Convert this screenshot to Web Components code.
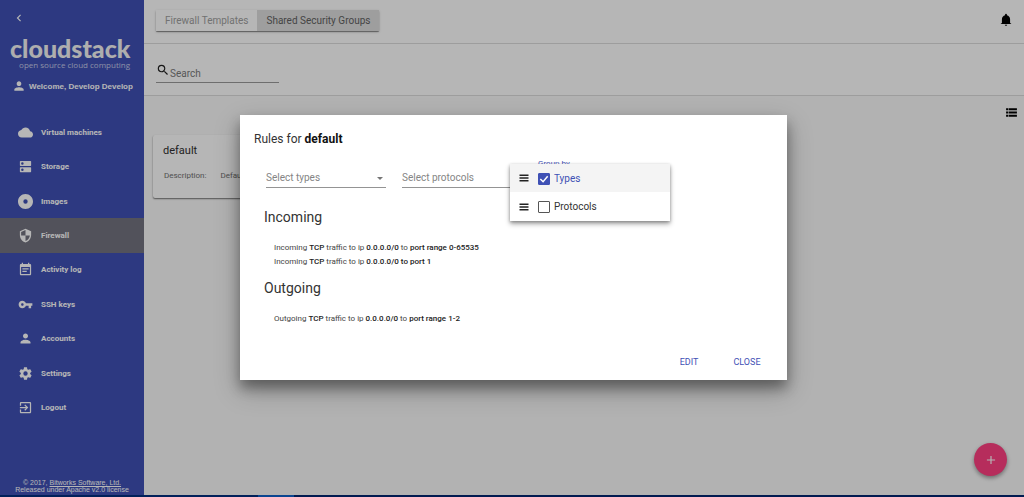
<!DOCTYPE html>
<html lang="en">
<head>
<meta charset="utf-8">
<title>CloudStack UI</title>
<style>
html,body{margin:0;height:100%}
body{font-family:Roboto,"Liberation Sans",sans-serif;background:#fafafa;color:#212121}
</style>
</head>
<body>
<cs-app></cs-app>
<script>
const ICONS = {
  back:'M15.41 7.41L14 6l-6 6 6 6 1.41-1.41L10.83 12z',
  person:'M12 12c2.21 0 4-1.79 4-4s-1.79-4-4-4-4 1.79-4 4 1.79 4 4 4zm0 2c-2.67 0-8 1.34-8 4v2h16v-2c0-2.66-5.33-4-8-4z',
  cloud:'M19.35 10.04C18.67 6.59 15.64 4 12 4 9.11 4 6.6 5.64 5.35 8.04 2.34 8.36 0 10.91 0 14c0 3.31 2.69 6 6 6h13c2.76 0 5-2.24 5-5 0-2.64-2.05-4.78-4.65-4.96z',
  storage:'M4 3h16a1 1 0 0 1 1 1v6a1 1 0 0 1-1 1H4a1 1 0 0 1-1-1V4a1 1 0 0 1 1-1zm0 10h16a1 1 0 0 1 1 1v6a1 1 0 0 1-1 1H4a1 1 0 0 1-1-1v-6a1 1 0 0 1 1-1zM7 5a2 2 0 1 0 0 4 2 2 0 0 0 0-4zm0 10a2 2 0 1 0 0 4 2 2 0 0 0 0-4z',
  disc:'M12 0C5.400 0 0 5.400 0 12s5.400 12 12 12 12-5.400 12-12S18.600 0 12 0zm0 8.500a3.500 3.500 0 1 1 0 7 3.500 3.500 0 0 1 0-7z',
  shield:'M12 1L3 5v6c0 5.55 3.84 10.74 9 12 5.16-1.26 9-6.45 9-12V5l-9-4zm0 10.99h7c-.53 4.12-3.28 7.79-7 8.94V12H5V6.3l7-3.11v8.8z',
  log:'M17 10H7v2h10v-2zm2-7h-1V1h-2v2H8V1H6v2H5c-1.11 0-2 .9-2 2v14c0 1.1.89 2 2 2h14c1.1 0 2-.9 2-2V5c0-1.1-.9-2-2-2zm0 16H5V8h14v11zm-5-5H7v2h7v-2z',
  key:'M12.65 10C11.83 7.67 9.61 6 7 6c-3.31 0-6 2.69-6 6s2.69 6 6 6c2.61 0 4.83-1.67 5.65-4H17v4h4v-4h2v-4H12.65zM7 14c-1.1 0-2-.9-2-2s.9-2 2-2 2 .9 2 2-.9 2-2 2z',
  gear:'M12 15.5A3.5 3.5 0 0 1 8.5 12 3.5 3.5 0 0 1 12 8.5a3.5 3.5 0 0 1 3.5 3.5 3.5 3.5 0 0 1-3.5 3.5m7.43-2.53c.04-.32.07-.64.07-.97s-.03-.66-.07-1l2.11-1.63c.19-.15.24-.42.12-.64l-2-3.46c-.12-.22-.39-.31-.61-.22l-2.49 1c-.52-.39-1.06-.73-1.69-.98l-.37-2.65A.506.506 0 0 0 14 2h-4c-.25 0-.46.18-.5.42l-.37 2.65c-.63.25-1.17.59-1.69.98l-2.49-1c-.22-.09-.49 0-.61.22l-2 3.46c-.13.22-.07.49.12.64L4.57 11c-.04.34-.07.67-.07 1s.03.65.07.97l-2.11 1.66c-.19.15-.25.42-.12.64l2 3.46c.12.22.39.3.61.22l2.49-1.01c.52.4 1.06.74 1.69.99l.37 2.65c.04.24.25.42.5.42h4c.25 0 .46-.18.5-.42l.37-2.65c.63-.26 1.17-.59 1.69-.99l2.49 1.01c.22.08.49 0 .61-.22l2-3.46c.12-.22.07-.49-.12-.64l-2.11-1.66z',
  exit:'M10.09 15.59L11.5 17l5-5-5-5-1.41 1.41L12.67 11H3v2h9.67l-2.58 2.59zM19 3H5c-1.11 0-2 .9-2 2v4h2V5h14v14H5v-4H3v4c0 1.1.89 2 2 2h14c1.1 0 2-.9 2-2V5c0-1.1-.9-2-2-2z',
  search:'M15.5 14h-.79l-.28-.27A6.47 6.47 0 0 0 16 9.5 6.5 6.5 0 1 0 9.5 16c1.61 0 3.09-.59 4.23-1.57l.27.28v.79l5 4.99L20.49 19l-4.99-5zm-6 0C7.01 14 5 11.99 5 9.5S7.01 5 9.5 5 14 7.01 14 9.5 11.99 14 9.5 14z',
  bell:'M12 22c1.1 0 2-.9 2-2h-4c0 1.1.89 2 2 2zm7-5v-6.5c0-3.4-2.2-6-5.4-6.8V3a1.6 1.6 0 0 0-3.2 0v.7C7.200 4.500 5 7.100 5 10.500V17l-2 1.500V19h18v-.5z',
  list:'M2 4h4v4H2zm0 6h4v4H2zm0 6h4v4H2zM7 4h15v4H7zm0 6h15v4H7zm0 6h15v4H7z',
  plus:'M19 13h-6v6h-2v-6H5v-2h6V5h2v6h6z',
  menu:'M3 19h18v-3H3v3zm0-5.500h18v-3H3v3zM3 5v3h18V5H3z',
  arrow:'M6 10l6 6 6-6z'
};

function define(name, html) {
  customElements.define(name, class extends HTMLElement {
    constructor() {
      super();
      const t = document.createElement('template');
      t.innerHTML = html(this);
      this.attachShadow({mode:'open'}).append(t.content);
    }
  });
}

customElements.define('cs-icon', class extends HTMLElement {
  connectedCallback() {
    if (this.shadowRoot) return;
    this.attachShadow({mode:'open'}).innerHTML = `
      <style>:host{display:block;flex:none;width:var(--size,14px);height:var(--size,14px)}
      svg{display:block;width:100%;height:100%;fill:currentColor}</style>
      <svg viewBox="0 0 24 24" aria-hidden="true"><path fill-rule="evenodd" d="${ICONS[this.getAttribute('name')]}"/></svg>`;
  }
});

customElements.define('cs-nav-item', class extends HTMLElement {
  connectedCallback() {
    if (this.shadowRoot) return;
    this.attachShadow({mode:'open'}).innerHTML = `
      <style>
      :host{display:flex;flex:1;min-height:24px}
      :host([active]){background:#747480}
      a{flex:1;display:flex;align-items:center;gap:8px;padding-left:18px;color:inherit;text-decoration:none;font-size:8px;font-weight:700}
      cs-icon{--size:15px}
      </style>
      <a href="#"><cs-icon name="${this.getAttribute('icon')}"></cs-icon><slot></slot></a>`;
  }
});

define('cs-sidebar', () => `
  <style>
  :host{display:flex;flex-direction:column;flex:none;width:144px;background:#3f51b5;color:#fff}
  .back{display:block;margin:11px 0 0 12px;padding:0;border:0;background:none;color:inherit;width:14px;height:14px;--size:14px}
  .logo{margin:11px 14px 0 10px;text-align:right;white-space:nowrap;color:#f4f4f4}
  .name{font:900 25px/24px Lato,sans-serif}
  .tag{font:8px/9px "Open Sans",sans-serif;color:#c5cae9}
  .user{display:flex;align-items:center;gap:3px;height:14px;margin:10px 0 22px 12px;font:700 8px "Liberation Sans",sans-serif;white-space:nowrap}
  nav{flex:1;display:flex;flex-direction:column}
  footer{padding:54px 0 2px;text-align:center;font:7px/7px "Liberation Sans",sans-serif}
  footer a{color:inherit}
  </style>
  <button class="back" aria-label="Back"><cs-icon name="back"></cs-icon></button>
  <div class="logo"><div class="name">cloudstack</div><div class="tag">open source cloud computing</div></div>
  <div class="user"><cs-icon name="person"></cs-icon><span>Welcome, Develop Develop</span></div>
  <nav>
    <cs-nav-item icon="cloud">Virtual machines</cs-nav-item>
    <cs-nav-item icon="storage">Storage</cs-nav-item>
    <cs-nav-item icon="disc">Images</cs-nav-item>
    <cs-nav-item icon="shield" active>Firewall</cs-nav-item>
    <cs-nav-item icon="log">Activity log</cs-nav-item>
    <cs-nav-item icon="key">SSH keys</cs-nav-item>
    <cs-nav-item icon="person">Accounts</cs-nav-item>
    <cs-nav-item icon="gear">Settings</cs-nav-item>
    <cs-nav-item icon="exit">Logout</cs-nav-item>
  </nav>
  <footer>© 2017, <a href="#">Bitworks Software, Ltd.</a><br>Released under Apache v2.0 license</footer>
`);

define('cs-toolbar', () => `
  <style>
  :host{display:flex;justify-content:space-between;height:43px;background:#fff;border-bottom:1px solid #dcdcdc;padding:0 11px 0 12px}
  .tabs{display:flex;margin-top:10px;height:21px;border-radius:1px;box-shadow:0 1px 1px #0006,0 1px 3px #0003}
  .tabs button{border:0;background:#fff;padding:0 9px;font:10px Roboto,sans-serif;color:#a0a0a0}
  .tabs button[aria-selected=true]{background:#dedede;color:#616161}
  .bell{border:0;background:none;padding:0;color:#000;align-self:flex-start;margin-top:13px}
  </style>
  <div class="tabs" role="tablist">
    <button role="tab" aria-selected="false">Firewall Templates</button>
    <button role="tab" aria-selected="true">Shared Security Groups</button>
  </div>
  <button class="bell" aria-label="Notifications"><cs-icon name="bell"></cs-icon></button>
`);

define('cs-search', () => `
  <style>
  :host{display:flow-root;height:51px;background:#fff;border-bottom:1px solid #dcdcdc}
  label{display:flex;align-items:flex-start;width:123px;height:19px;margin:19px 0 0 12px;border-bottom:1px solid #9a9a9a}
  input{flex:1;min-width:0;height:18px;margin-top:1px;border:0;padding:0;background:none;outline:0;font:10px Roboto,sans-serif;color:#333}
  input::placeholder{color:#7a7a7a;opacity:1}
  </style>
  <label><cs-icon name="search"></cs-icon><input type="text" placeholder="Search" aria-label="Search"></label>
`);

define('cs-group-card', () => `
  <style>
  :host{display:block;width:240px;background:#fff;border-radius:2px;box-shadow:0 1px 2px #0006,0 1px 1px #0003;padding:9px 10px 15px;box-sizing:border-box}
  h2{margin:0 0 11px;font-size:11px;font-weight:400;line-height:14px;color:#303030}
  dl{display:flex;gap:14px;margin:0 1px;font-size:8px;line-height:14px;color:#707070}
  dd{margin:0}
  </style>
  <h2><slot name="title"></slot></h2>
  <dl><dt>Description:</dt><dd><slot></slot></dd></dl>
`);

define('cs-select', el => `
  <style>
  :host{display:block;position:relative;width:120px}
  select{display:block;width:100%;height:20px;appearance:none;border:0;border-bottom:1px solid #949494;border-radius:0;background:none;padding:0;font:10px Roboto,sans-serif;color:#858585;outline:0}
  cs-icon{position:absolute;right:0;top:4px;--size:12px;color:#757575;pointer-events:none}
  </style>
  <select aria-label="${el.getAttribute('label')}"><option>${el.getAttribute('label')}</option></select>
  <cs-icon name="arrow"></cs-icon>
`);

define('cs-group-by', () => `
  <style>
  :host{display:block;position:relative;width:120px}
  .trigger{display:block;position:relative;width:100%;height:20px;border:0;border-bottom:1px solid #3f51b5;background:none;padding:0}
  .trigger span{position:absolute;left:0;bottom:18px;font:8px/10px Roboto,sans-serif;color:#3f51b5}
  .menu{position:absolute;left:-28px;top:-4px;width:160px;background:#fff;box-shadow:0 3px 5px #0005,0 1px 3px #0004;z-index:2}
  label{display:flex;align-items:center;height:28px;padding-left:8px;font-size:10px;color:#333}
  label+label{height:29px}
  label:first-child{background:#f4f4f4;color:#3f51b5}
  cs-icon{--size:12px;color:#222}
  input{appearance:none;box-sizing:border-box;width:12px;height:12px;margin:1px 4px 0 8px;border:1px solid #555;outline:0;border-radius:1px}
  input:checked{border-color:#3f51b5;background:#3f51b5 url("data:image/svg+xml,%3Csvg xmlns='http://www.w3.org/2000/svg' viewBox='0 0 12 12'%3E%3Cpath d='M2 6l3 3 5-6' fill='none' stroke='white' stroke-width='1.6'/%3E%3C/svg%3E") center/11px}
  </style>
  <button class="trigger" aria-haspopup="true"><span>Group by</span></button>
  <div class="menu">
    <label><cs-icon name="menu"></cs-icon><input type="checkbox" checked>Types</label>
    <label><cs-icon name="menu"></cs-icon><input type="checkbox">Protocols</label>
  </div>
`);

define('cs-rules', el => `
  <style>
  :host{display:block;margin:0 10px}
  h3{margin:0 0 14px;font-size:14px;font-weight:400;line-height:20px;color:#333}
  ul{list-style:none;margin:0 0 9px;padding:0 0 0 10px}
  ::slotted(li){font-size:8px;line-height:14px;color:#444}
  </style>
  <h3>${el.getAttribute('heading')}</h3><ul><slot></slot></ul>
`);

define('cs-dialog', () => `
  <style>
  :host{display:flex;flex-direction:column;width:100%;max-width:547px;background:#fff;padding:14px 14px 6px;box-sizing:border-box;box-shadow:0 8px 12px #0005,0 10px 24px #0004}
  h1{margin:0 0 19px;font-size:12px;font-weight:400;line-height:20px;color:#333}
  h1 b{color:#111}
  li b{font-weight:500;color:#222}
  .filters{display:flex;gap:16px;margin:0 12px 19px}
  .actions{display:flex;justify-content:flex-end;gap:6px;margin-top:15px}
  .actions button{min-width:52px;height:24px;border:0;background:none;padding:0;font:9px Roboto,sans-serif;color:#3f51b5;text-transform:uppercase}
  </style>
  <h1>Rules for <b>default</b></h1>
  <div class="filters">
    <cs-select label="Select types"></cs-select>
    <cs-select label="Select protocols"></cs-select>
    <cs-group-by></cs-group-by>
  </div>
  <cs-rules heading="Incoming">
    <li>Incoming <b>TCP</b> traffic to ip <b>0.0.0.0/0</b> to <b>port range 0-65535</b></li>
    <li>Incoming <b>TCP</b> traffic to ip <b>0.0.0.0/0 to port 1</b></li>
  </cs-rules>
  <cs-rules heading="Outgoing">
    <li>Outgoing <b>TCP</b> traffic to ip <b>0.0.0.0/0</b> to <b>port range 1-2</b></li>
  </cs-rules>
  <div class="actions"><button>Edit</button><button>Close</button></div>
`);

define('cs-app', () => `
  <style>
  :host{display:flex;flex-direction:column;min-height:100vh}
  .shell{flex:1;display:flex;position:relative}
  main{flex:1;min-width:0;display:flex;flex-direction:column}
  .content{display:flex;justify-content:space-between;align-items:flex-start;padding:10px 6px 0 9px}
  cs-group-card{margin-top:29px}
  .view{border:0;background:none;padding:0;color:#000;--size:13px}
  .fab{position:absolute;right:17px;bottom:19px;width:33px;height:33px;border:0;border-radius:50%;background:#ff4081;color:#fff;padding:0;display:grid;place-items:center;box-shadow:0 2px 4px #0006}
  .fab cs-icon{--size:14px}
  .backdrop{position:absolute;inset:0;background:rgba(0,0,0,.288);display:flex;align-items:center;justify-content:center;padding-left:3px}
  .strip{height:2px;background:linear-gradient(90deg,#00205a 0 258px,#0a4590 258px 294px,#001a50 294px)}
  </style>
  <div class="shell">
    <cs-sidebar></cs-sidebar>
    <main>
      <cs-toolbar></cs-toolbar>
      <cs-search></cs-search>
      <div class="content">
        <cs-group-card><span slot="title">default</span>Default</cs-group-card>
        <button class="view" aria-label="List view"><cs-icon name="list"></cs-icon></button>
      </div>
    </main>
    <button class="fab" aria-label="Add"><cs-icon name="plus"></cs-icon></button>
    <div class="backdrop"><cs-dialog role="dialog" aria-modal="true"></cs-dialog></div>
  </div>
  <div class="strip"></div>
`);
</script>
</body>
</html>
